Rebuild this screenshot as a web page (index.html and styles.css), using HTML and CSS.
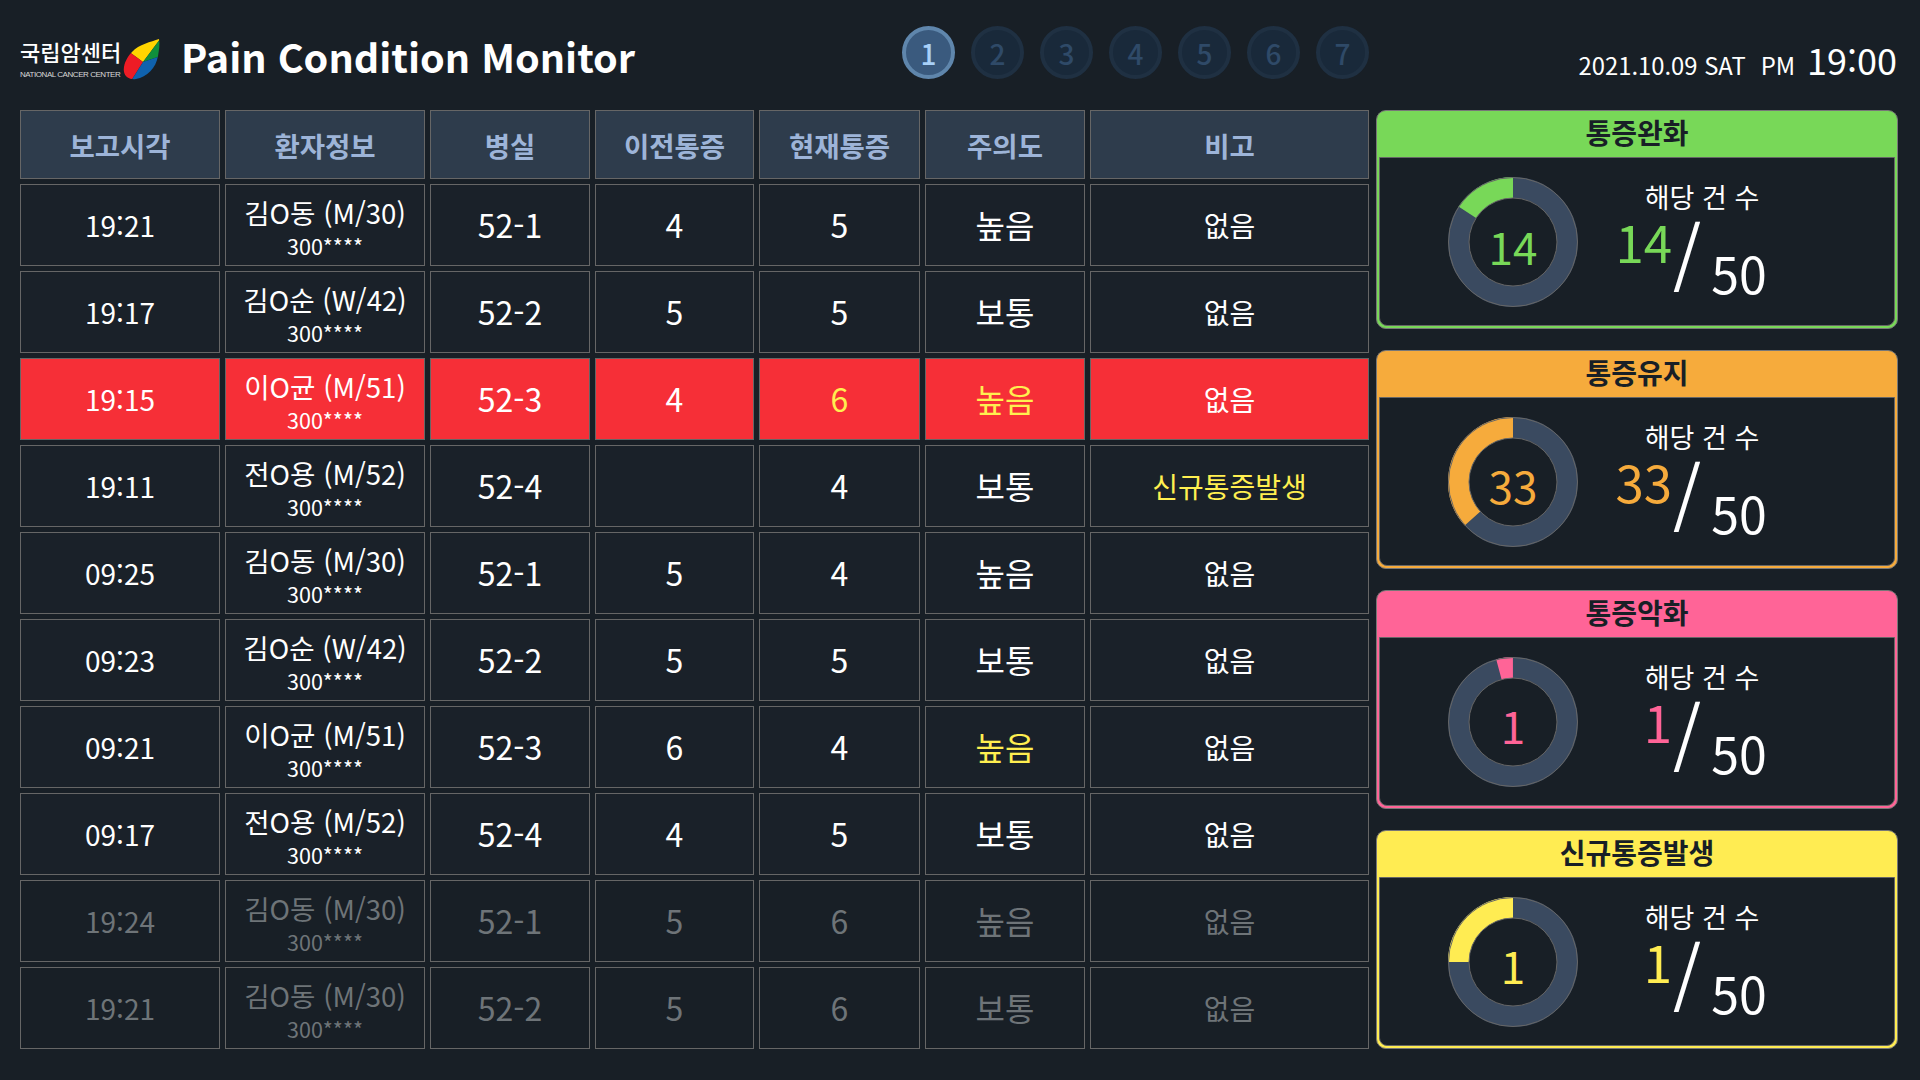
FILE: index.html
```html
<!DOCTYPE html>
<html lang="ko">

<head>
  <meta charset="UTF-8" />
  <title>Pain Condition Monitor</title>
  <link rel="stylesheet" href="styles.css">
</head>

<body>

  <header class="top">
    <div class="logo">
      <div class="logo-text">
        <span class="logo-ko">국립암센터</span>
        <span class="logo-en">NATIONAL CANCER CENTER</span>
      </div>
      <svg class="leaf" viewBox="0 0 37 42">
        <defs>
          <clipPath id="leafShape">
            <path d="M36 1C28 4 16 6 9 14C3 20 0 28 1 34C2 39 7 42 13 41C24 39 33 30 35 18C36 12 37 6 36 1Z" />
          </clipPath>
        </defs>
        <g clip-path="url(#leafShape)">
          <polygon points="38,0 20,24 5,13 10,0" fill="#ffd500" />
          <polygon points="38,0 20,24 38,18" fill="#0f8f3c" />
          <polygon points="5,13 20,24 8,43 0,43 0,13" fill="#ee1c25" />
          <polygon points="20,24 38,18 38,43 8,43" fill="#0f62ae" />
        </g>
      </svg>
    </div>
    <h1 class="title">Pain Condition Monitor</h1>
    <div class="pager">
      <span class="dot active">1</span>
      <span class="dot">2</span>
      <span class="dot">3</span>
      <span class="dot">4</span>
      <span class="dot">5</span>
      <span class="dot">6</span>
      <span class="dot">7</span>
    </div>
    <div class="clock">
      <span class="clock-date">2021.10.09 SAT</span>
      <span class="clock-ampm">PM</span>
      <span class="clock-time">19:00</span>
    </div>
  </header>

  <main class="main">
    <div class="board">
      <div class="cell head">보고시각</div>
      <div class="cell head">환자정보</div>
      <div class="cell head">병실</div>
      <div class="cell head">이전통증</div>
      <div class="cell head">현재통증</div>
      <div class="cell head">주의도</div>
      <div class="cell head">비고</div>

      <div class="cell time">19:21</div>
      <div class="cell who"><span class="name">김O동 (M/30)</span><span class="id">300****</span></div>
      <div class="cell big">52-1</div>
      <div class="cell big">4</div>
      <div class="cell big">5</div>
      <div class="cell big">높음</div>
      <div class="cell note">없음</div>

      <div class="cell time">19:17</div>
      <div class="cell who"><span class="name">김O순 (W/42)</span><span class="id">300****</span></div>
      <div class="cell big">52-2</div>
      <div class="cell big">5</div>
      <div class="cell big">5</div>
      <div class="cell big">보통</div>
      <div class="cell note">없음</div>

      <div class="cell time alert">19:15</div>
      <div class="cell who alert"><span class="name">이O균 (M/51)</span><span class="id">300****</span></div>
      <div class="cell big alert">52-3</div>
      <div class="cell big alert">4</div>
      <div class="cell big alert warn">6</div>
      <div class="cell big alert warn">높음</div>
      <div class="cell note alert">없음</div>

      <div class="cell time">19:11</div>
      <div class="cell who"><span class="name">전O용 (M/52)</span><span class="id">300****</span></div>
      <div class="cell big">52-4</div>
      <div class="cell big"></div>
      <div class="cell big">4</div>
      <div class="cell big">보통</div>
      <div class="cell note warn">신규통증발생</div>

      <div class="cell time">09:25</div>
      <div class="cell who"><span class="name">김O동 (M/30)</span><span class="id">300****</span></div>
      <div class="cell big">52-1</div>
      <div class="cell big">5</div>
      <div class="cell big">4</div>
      <div class="cell big">높음</div>
      <div class="cell note">없음</div>

      <div class="cell time">09:23</div>
      <div class="cell who"><span class="name">김O순 (W/42)</span><span class="id">300****</span></div>
      <div class="cell big">52-2</div>
      <div class="cell big">5</div>
      <div class="cell big">5</div>
      <div class="cell big">보통</div>
      <div class="cell note">없음</div>

      <div class="cell time">09:21</div>
      <div class="cell who"><span class="name">이O균 (M/51)</span><span class="id">300****</span></div>
      <div class="cell big">52-3</div>
      <div class="cell big">6</div>
      <div class="cell big">4</div>
      <div class="cell big warn">높음</div>
      <div class="cell note">없음</div>

      <div class="cell time">09:17</div>
      <div class="cell who"><span class="name">전O용 (M/52)</span><span class="id">300****</span></div>
      <div class="cell big">52-4</div>
      <div class="cell big">4</div>
      <div class="cell big">5</div>
      <div class="cell big">보통</div>
      <div class="cell note">없음</div>

      <div class="cell time dim">19:24</div>
      <div class="cell who dim"><span class="name">김O동 (M/30)</span><span class="id">300****</span></div>
      <div class="cell big dim">52-1</div>
      <div class="cell big dim">5</div>
      <div class="cell big dim">6</div>
      <div class="cell big dim">높음</div>
      <div class="cell note dim">없음</div>

      <div class="cell time dim">19:21</div>
      <div class="cell who dim"><span class="name">김O동 (M/30)</span><span class="id">300****</span></div>
      <div class="cell big dim">52-2</div>
      <div class="cell big dim">5</div>
      <div class="cell big dim">6</div>
      <div class="cell big dim">보통</div>
      <div class="cell note dim">없음</div>
    </div>

    <aside class="side">
      <section class="panel green">
        <h2 class="panel-title">통증완화</h2>
        <div class="panel-body">
          <div class="donut">
            <svg class="ring" viewBox="0 0 130 130">
              <circle class="ring-track" cx="65" cy="65" r="54.5" />
              <circle class="ring-value" cx="65" cy="65" r="54.5" pathLength="360" stroke-dasharray="57 303" transform="rotate(-147 65 65)" />
              <circle class="ring-line" cx="65" cy="65" r="64.5" />
              <circle class="ring-line" cx="65" cy="65" r="44" />
            </svg>
            <span class="donut-num">14</span>
          </div>
          <div class="stats">
            <div class="stats-label">해당 건 수</div>
            <div class="ratio"><span class="count">14</span><span class="slash">/</span><span class="total">50</span></div>
          </div>
        </div>
      </section>

      <section class="panel orange">
        <h2 class="panel-title">통증유지</h2>
        <div class="panel-body">
          <div class="donut">
            <svg class="ring" viewBox="0 0 130 130">
              <circle class="ring-track" cx="65" cy="65" r="54.5" />
              <circle class="ring-value" cx="65" cy="65" r="54.5" pathLength="360" stroke-dasharray="132 228" transform="rotate(-222 65 65)" />
              <circle class="ring-line" cx="65" cy="65" r="64.5" />
              <circle class="ring-line" cx="65" cy="65" r="44" />
            </svg>
            <span class="donut-num">33</span>
          </div>
          <div class="stats">
            <div class="stats-label">해당 건 수</div>
            <div class="ratio"><span class="count">33</span><span class="slash">/</span><span class="total">50</span></div>
          </div>
        </div>
      </section>

      <section class="panel pink">
        <h2 class="panel-title">통증악화</h2>
        <div class="panel-body">
          <div class="donut">
            <svg class="ring" viewBox="0 0 130 130">
              <circle class="ring-track" cx="65" cy="65" r="54.5" />
              <circle class="ring-value" cx="65" cy="65" r="54.5" pathLength="360" stroke-dasharray="15 345" transform="rotate(-105 65 65)" />
              <circle class="ring-line" cx="65" cy="65" r="64.5" />
              <circle class="ring-line" cx="65" cy="65" r="44" />
            </svg>
            <span class="donut-num">1</span>
          </div>
          <div class="stats">
            <div class="stats-label">해당 건 수</div>
            <div class="ratio"><span class="count">1</span><span class="slash">/</span><span class="total">50</span></div>
          </div>
        </div>
      </section>

      <section class="panel yellow">
        <h2 class="panel-title">신규통증발생</h2>
        <div class="panel-body">
          <div class="donut">
            <svg class="ring" viewBox="0 0 130 130">
              <circle class="ring-track" cx="65" cy="65" r="54.5" />
              <circle class="ring-value" cx="65" cy="65" r="54.5" pathLength="360" stroke-dasharray="90 270" transform="rotate(-180 65 65)" />
              <circle class="ring-line" cx="65" cy="65" r="64.5" />
              <circle class="ring-line" cx="65" cy="65" r="44" />
            </svg>
            <span class="donut-num">1</span>
          </div>
          <div class="stats">
            <div class="stats-label">해당 건 수</div>
            <div class="ratio"><span class="count">1</span><span class="slash">/</span><span class="total">50</span></div>
          </div>
        </div>
      </section>
    </aside>
  </main>

</body>

</html>
```

FILE: styles.css
```css
* {
  box-sizing: border-box;
}

body {
  background-color: #181f26;
  color: white;
  font-family: "Noto Sans CJK KR", "Noto Sans", sans-serif;
  font-variant-ligatures: no-contextual;
  margin: 0;
  padding: 0 23px 0 20px;
  width: 1920px;
  height: 1080px;
  overflow: hidden;
}

/* top bar */
.top {
  display: flex;
  align-items: flex-start;
  height: 110px;
}

.logo {
  display: flex;
  width: 161px;
  margin-top: 36px;
}

.logo-text {
  display: flex;
  flex-direction: column;
  width: 103px;
}

.logo-ko {
  font-size: 22px;
  font-weight: 500;
  line-height: 30px;
  white-space: nowrap;
}

.logo-en {
  font-family: "Liberation Sans", sans-serif;
  font-size: 8px;
  line-height: 10px;
  letter-spacing: -0.45px;
  margin-top: 4px;
  color: #d8d8d8;
  white-space: nowrap;
}

.leaf {
  width: 37px;
  height: 42px;
  flex: none;
  margin-top: 2px;
}

.title {
  font-size: 39.6px;
  font-weight: 700;
  line-height: 58px;
  margin: 27px 0 0;
  width: 721px;
  white-space: nowrap;
}

.pager {
  display: flex;
  gap: 16px;
  margin-top: 26px;
}

.dot {
  width: 53px;
  height: 53px;
  border-radius: 50%;
  border: 4px solid #1f3042;
  background-color: #19293a;
  color: #2f4a68;
  font-size: 28px;
  font-weight: 500;
  display: flex;
  align-items: center;
  justify-content: center;
}

.dot.active {
  border-color: #5f86ac;
  background-color: #3a5a7e;
  color: #a8d0f8;
}

.clock {
  display: flex;
  align-items: baseline;
  margin-left: auto;
  margin-top: 33px;
  line-height: 52px;
  white-space: nowrap;
}

.clock-date,
.clock-ampm {
  font-size: 23.8px;
}

.clock-ampm {
  margin-left: 15px;
}

.clock-time {
  font-size: 36px;
  margin-left: 12px;
}

/* table + side panels */
.main {
  display: flex;
  justify-content: space-between;
}

.board {
  display: grid;
  grid-template-columns: 200px 200px 160px 159px 161px 160px 279px;
  grid-template-rows: 69px repeat(10, 82px);
  gap: 5px;
  width: 1349px;
}

.cell {
  border: 1px solid #666;
  background-color: #1a2129;
  display: flex;
  flex-direction: column;
  align-items: center;
  justify-content: center;
}

.head {
  background-color: #2e3c4c;
  color: #9db4d8;
  font-size: 27.5px;
  font-weight: 700;
  padding-top: 1px;
}

.time,
.note {
  font-size: 28px;
}

.big {
  font-size: 32px;
  padding-bottom: 2px;
}

.who {
  padding-top: 2px;
}

.name {
  font-size: 27.6px;
  line-height: 36px;
}

.id {
  font-size: 21.5px;
  line-height: 24px;
  margin-top: 4px;
}

.alert {
  background-color: #f62f37;
}

.warn {
  color: #ffef50;
}

.dim {
  color: #6e7478;
  background-color: #181f26;
}

.side {
  display: flex;
  flex-direction: column;
  justify-content: space-between;
  width: 522px;
  height: 938.6px;
  margin-right: -1px;
}

.panel {
  height: 219px;
  border: 1px solid #777;
  border-radius: 10px;
  padding: 0 2px 2px;
  display: flex;
  flex-direction: column;
  background-color: var(--accent);
}

.green {
  --accent: #78d858;
}

.orange {
  --accent: #f6ab3c;
}

.pink {
  --accent: #ff6497;
}

.yellow {
  --accent: #ffec52;
}

.panel-title {
  height: 46px;
  margin: 0;
  color: #181f26;
  font-size: 28px;
  font-weight: 700;
  line-height: 42px;
  text-align: center;
}

.panel-body {
  flex: 1;
  display: flex;
  background-color: #181f26;
  border: 1px solid #666;
  border-radius: 0 0 8px 8px;
  padding: 19px 0 0 68px;
}

.donut {
  display: grid;
  place-items: center;
  width: 130px;
  height: 130px;
  color: var(--accent);
}

.ring,
.donut-num {
  grid-area: 1 / 1;
}

.ring {
  width: 130px;
  height: 130px;
}

.ring-track,
.ring-value {
  fill: none;
  stroke-width: 21;
}

.ring-track {
  stroke: #3a4a60;
}

.ring-value {
  stroke: var(--accent);
}

.ring-line {
  fill: none;
  stroke: #666;
  stroke-width: 1;
}

.donut-num {
  font-size: 44px;
  line-height: 50px;
  padding-top: 7px;
}

.stats {
  width: 204px;
  margin-left: 22px;
}

.stats-label {
  font-size: 27px;
  line-height: 40px;
  text-align: center;
}

.ratio {
  display: flex;
  align-items: flex-start;
}

.count {
  width: 72px;
  color: var(--accent);
  font-size: 51px;
  line-height: 60px;
  margin-top: -6px;
  text-align: right;
}

.slash {
  font-size: 72px;
  line-height: 80px;
  margin: -4px 0 0 1px;
}

.total {
  font-size: 50px;
  line-height: 60px;
  margin: 25px 0 0 10px;
}
```
